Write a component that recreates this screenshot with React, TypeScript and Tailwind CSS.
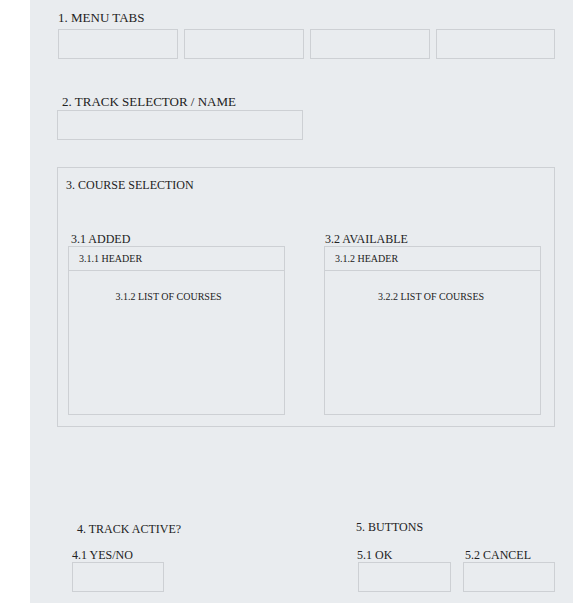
import React from "react";

const serif = { fontFamily: '"Liberation Serif", "Times New Roman", serif' };

function Box({ className }: { className: string }) {
  return <div className={"border border-[#cdd0d4] " + className} />;
}

function CourseColumn({
  label,
  header,
  list,
  labelClass,
  listClass,
}: {
  label: string;
  header: string;
  list: string;
  labelClass: string;
  listClass: string;
}) {
  return (
    <div className="w-[217px]">
      <div className={"text-[12px] leading-[14px] " + labelClass}>{label}</div>
      <div className="flex h-[169px] flex-col border border-[#cdd0d4]">
        <div className="h-[24px] border-b border-[#cdd0d4] pl-[10px] text-[10px] leading-[23px]">
          {header}
        </div>
        <div className={"pt-[19px] text-center text-[10px] leading-[14px] " + listClass}>
          {list}
        </div>
      </div>
    </div>
  );
}

export default function App() {
  return (
    <div className="flex min-h-[603px] w-[573px] bg-white" style={serif}>
      <div className="ml-[30px] min-h-[603px] w-[543px] bg-[#e9ecef] pt-[10px] text-[#222]">
        <div className="ml-[28px] text-[13px] leading-[15px]">1. MENU TABS</div>
        <div className="ml-[28px] mt-[4px] flex gap-[6px]">
          <Box className="h-[30px] w-[120px]" />
          <Box className="h-[30px] w-[120px]" />
          <Box className="h-[30px] w-[120px]" />
          <Box className="h-[30px] w-[119px]" />
        </div>

        <div className="ml-[32px] mt-[35px] text-[13px] leading-[15px]">
          2. TRACK SELECTOR / NAME
        </div>
        <Box className="ml-[27px] mt-[1px] h-[30px] w-[246px]" />

        <div className="ml-[27px] mt-[27px] h-[260px] w-[498px] border border-[#cdd0d4]">
          <div className="ml-[8px] mt-[10px] text-[12px] leading-[14px]">
            3. COURSE SELECTION
          </div>
          <div className="ml-[10px] mt-[40px] flex gap-[39px]">
            <CourseColumn
              label="3.1 ADDED"
              header="3.1.1 HEADER"
              list="3.1.2 LIST OF COURSES"
              labelClass="pl-[3px]"
              listClass="pr-[16px]"
            />
            <CourseColumn
              label="3.2 AVAILABLE"
              header="3.1.2 HEADER"
              list="3.2.2 LIST OF COURSES"
              labelClass="pl-[1px]"
              listClass="pr-[3px]"
            />
          </div>
        </div>

        <div className="mt-[93px] flex">
          <div className="ml-[42px] w-[92px]">
            <div className="mt-[2px] whitespace-nowrap pl-[5px] text-[12px] leading-[14px]">
              4. TRACK ACTIVE?
            </div>
            <div className="mt-[12px] whitespace-nowrap text-[12px] leading-[14px]">4.1 YES/NO</div>
            <Box className="h-[30px] w-[92px]" />
          </div>
          <div className="ml-[192px]">
            <div className="text-[12px] leading-[14px]">5. BUTTONS</div>
            <div className="mt-[14px] flex">
              <div className="ml-[2px] w-[93px]">
                <div className="-ml-[1px] text-[12px] leading-[14px]">5.1 OK</div>
                <Box className="h-[30px] w-[93px]" />
              </div>
              <div className="ml-[12px] w-[92px]">
                <div className="ml-[2px] whitespace-nowrap text-[12px] leading-[14px]">5.2 CANCEL</div>
                <Box className="h-[30px] w-[92px]" />
              </div>
            </div>
          </div>
        </div>
      </div>
    </div>
  );
}
